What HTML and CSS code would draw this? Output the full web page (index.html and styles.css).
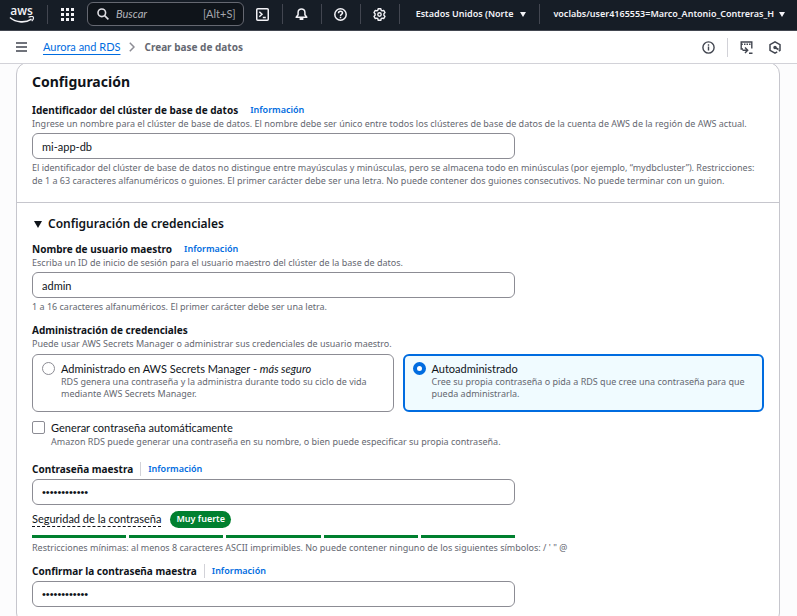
FILE: index.html
```html
<!DOCTYPE html>
<html lang="es">
<head>
<meta charset="utf-8">
<meta name="viewport" content="width=device-width, initial-scale=1">
<title>Crear base de datos</title>
<link rel="stylesheet" href="styles.css">
</head>
<body>
<header class="topbar">
  <a class="logo" href="#"><span class="logo-text">aws</span>
    <svg class="logo-smile" viewBox="0 0 26 8" width="26" height="8" aria-hidden="true"><path d="M1 1.5C7 7 17 7 22.5 3.2" fill="none" stroke="currentColor" stroke-width="1.6"/><path d="M19.6 1.2c2-.8 4.200-.8 4.600-.2s-.1 2.700-1.500 4.100" fill="none" stroke="currentColor" stroke-width="1.200"/></svg>
  </a>
  <button class="apps" type="button" aria-label="Servicios">
    <svg viewBox="0 0 13 13" width="13" height="13" fill="currentColor"><path d="M0 0h3v3H0zM5 0h3v3H5zM10 0h3v3h-3zM0 5h3v3H0zM5 5h3v3H5zM10 5h3v3h-3zM0 10h3v3H0zM5 10h3v3H5zM10 10h3v3h-3z"/></svg>
  </button>
  <div class="search">
    <svg viewBox="0 0 12 12" width="12" height="12" fill="none" stroke="currentColor" stroke-width="1.600"><circle cx="4.800" cy="4.800" r="3.800"/><path d="M7.600 7.600 11.400 11.400"/></svg>
    <input class="search-input" type="text" placeholder="Buscar" aria-label="Buscar">
    <span class="shortcut">[Alt+S]</span>
  </div>
  <nav class="tools">
    <button class="tool" type="button" aria-label="CloudShell"><svg viewBox="0 0 13 13" width="13" height="13" fill="none" stroke="currentColor" stroke-width="1.500"><rect x=".75" y=".75" width="11.500" height="11.500" rx="1"/><path d="M3.300 3.800 6 6.300 3.300 8.800M6.800 9.500h3"/></svg></button>
    <button class="tool" type="button" aria-label="Notificaciones"><svg viewBox="0 0 13 13" width="13" height="13" fill="none" stroke="currentColor" stroke-width="1.500"><path d="M1.200 9.300h10.600L9.900 6.800V4.300a3.400 3.400 0 0 0-6.800 0v2.500z" stroke-linejoin="round"/><path d="M4.600 11h3.800" stroke-width="2"/></svg></button>
    <button class="tool" type="button" aria-label="Ayuda"><svg viewBox="0 0 13 13" width="13" height="13" fill="none" stroke="currentColor" stroke-width="1.500"><circle cx="6.500" cy="6.500" r="5.700"/><path d="M4.500 5.300c0-2.700 4-2.500 4-.2 0 1.400-2 1.300-2 2.800M6.500 8.800v1.400"/></svg></button>
    <button class="tool" type="button" aria-label="Ajustes"><svg viewBox="0 0 13 13" width="13" height="13" fill="none" stroke="currentColor" stroke-width="1.400" stroke-linejoin="round"><path d="M5.200.8h2.600l.4 1.500 1 .6 1.500-.5L12 4.600l-1.100 1.200v1.400L12 8.400l-1.300 2.200-1.500-.5-1 .6-.4 1.500H5.200l-.4-1.500-1-.6-1.500.5L1 8.400l1.100-1.200V5.800L1 4.600l1.300-2.200 1.500.5 1-.6z"/><circle cx="6.500" cy="6.500" r="1.700"/></svg></button>
  </nav>
  <button class="menu menu-region" type="button"><span>Estados Unidos (Norte</span><i class="caret"></i></button>
  <button class="menu" type="button"><span>voclabs/user4165553=Marco_Antonio_Contreras_H</span><i class="caret"></i></button>
</header>

<div class="crumbbar">
  <button class="icon-button" type="button" aria-label="Abrir navegación"><svg viewBox="0 0 11 10" width="11" height="10" stroke="currentColor" stroke-width="1.500"><path d="M0 1h11M0 5h11M0 9h11"/></svg></button>
  <nav class="crumbs">
    <a class="crumb-link" href="#">Aurora and RDS</a>
    <svg viewBox="0 0 6 10" width="6" height="10" fill="none" stroke="currentColor" stroke-width="1.500"><path d="M.8.8 5 5 .8 9.200"/></svg>
    <span class="crumb-current">Crear base de datos</span>
  </nav>
  <div class="panel-tools">
    <button class="icon-button" type="button" aria-label="Información"><svg viewBox="0 0 13 13" width="13" height="13" fill="none" stroke="currentColor" stroke-width="1.400"><circle cx="6.500" cy="6.500" r="5.600"/><path d="M6.500 5.600v4M6.500 3.200v1.500"/></svg></button>
    <span class="rule"></span>
    <button class="icon-button" type="button" aria-label="Panel de comandos"><svg viewBox="0 0 13 13" width="13" height="13" fill="none" stroke="currentColor" stroke-width="1.400"><path d="M3 8H1.200V1h10.600v6.500M1 3.300h1.800M4 3.300h1.500M6.500 3.300H8M9 3.300h1.500M2.500 9.200h4.700M5 6.500l2.700 2.700L5 12M9 12.200h3.500"/></svg></button>
    <button class="icon-button" type="button" aria-label="Amazon Q"><svg viewBox="0 0 12 13" width="12" height="13" fill="none" stroke="currentColor" stroke-width="1.500"><path d="M8.200 10.900 6 12.100 1 9.300V3.700L6 .9l5 2.800v5.600L9.800 10"/><path d="M6 6.500 9.500 8.500" stroke-width="1.800"/><circle cx="6" cy="6.500" r="1" fill="currentColor"/></svg></button>
  </div>
</div>

<main class="content">
  <form class="card">
    <section class="section">
      <h2 class="title">Configuración</h2>
      <div class="field">
        <div class="label-row"><label for="cluster">Identificador del clúster de base de datos</label><a class="info" href="#">Información</a></div>
        <p class="hint">Ingrese un nombre para el clúster de base de datos. El nombre debe ser único entre todos los clústeres de base de datos de la cuenta de AWS de la región de AWS actual.</p>
        <input class="text-input" id="cluster" type="text" value="mi-app-db">
        <p class="hint">El identificador del clúster de base de datos no distingue entre mayúsculas y minúsculas, pero se almacena todo en minúsculas (por ejemplo, “mydbcluster”). Restricciones: de 1 a 63 caracteres alfanuméricos o guiones. El primer carácter debe ser una letra. No puede contener dos guiones consecutivos. No puede terminar con un guion.</p>
      </div>
    </section>
    <section class="section credentials">
      <h3 class="subtitle"><button class="expander" type="button" aria-expanded="true"><i class="caret"></i>Configuración de credenciales</button></h3>
      <div class="field">
        <div class="label-row"><label for="user">Nombre de usuario maestro</label><a class="info" href="#">Información</a></div>
        <p class="hint">Escriba un ID de inicio de sesión para el usuario maestro del clúster de la base de datos.</p>
        <input class="text-input" id="user" type="text" value="admin">
        <p class="hint">1 a 16 caracteres alfanuméricos. El primer carácter debe ser una letra.</p>
      </div>
      <div class="field" role="radiogroup" aria-labelledby="admin-label">
        <div class="label-row" id="admin-label">Administración de credenciales</div>
        <p class="hint">Puede usar AWS Secrets Manager o administrar sus credenciales de usuario maestro.</p>
        <div class="tiles">
          <label class="tile"><input class="radio" type="radio" name="admin"><span class="choice-text"><span class="choice-name">Administrado en AWS Secrets Manager - <em>más seguro</em></span><span class="hint">RDS genera una contraseña y la administra durante todo su ciclo de vida mediante AWS Secrets Manager.</span></span></label>
          <label class="tile selected"><input class="radio" type="radio" name="admin" checked><span class="choice-text"><span class="choice-name">Autoadministrado</span><span class="hint">Cree su propia contraseña o pida a RDS que cree una contraseña para que pueda administrarla.</span></span></label>
        </div>
      </div>
      <label class="check-row"><input class="checkbox" type="checkbox"><span class="choice-text"><span class="choice-name">Generar contraseña automáticamente</span><span class="hint">Amazon RDS puede generar una contraseña en su nombre, o bien puede especificar su propia contraseña.</span></span></label>
      <div class="field password">
        <div class="label-row"><label for="pass">Contraseña maestra</label><a class="info ruled" href="#">Información</a></div>
        <input class="text-input" id="pass" type="password" value="contrasena12">
        <div class="strength"><span class="strength-label">Seguridad de la contraseña</span><span class="badge">Muy fuerte</span></div>
        <div class="meter"><i></i><i></i><i></i><i></i><i></i></div>
        <p class="hint">Restricciones mínimas: al menos 8 caracteres ASCII imprimibles. No puede contener ninguno de los siguientes símbolos: / ' " @</p>
      </div>
      <div class="field">
        <div class="label-row"><label for="confirm">Confirmar la contraseña maestra</label><a class="info ruled" href="#">Información</a></div>
        <input class="text-input" id="confirm" type="password" value="contrasena12">
      </div>
    </section>
  </form>
</main>
</body>
</html>
```
FILE: styles.css
```css
* { box-sizing: border-box; }

body {
  margin: 0;
  height: 100vh;
  display: flex;
  flex-direction: column;
  overflow: hidden;
  background: #fcfcfd;
  color: #0f141a;
  font: 11px/14px Lato, "Noto Sans", sans-serif;
}

button, input { font: inherit; color: inherit; }
button { padding: 0; border: 0; background: none; }
h2, h3, p { margin: 0; }
a { color: #006ce0; }
svg { display: block; flex: none; }

.caret {
  flex: none;
  width: 0;
  height: 0;
  border: solid transparent;
  border-width: 5px 3px 0;
  border-top-color: currentColor;
}

/* Top bar */
.topbar {
  flex: none;
  display: flex;
  align-items: center;
  height: 31px;
  padding-bottom: 2px;
  border-bottom: 1px solid #424650;
  background: #161d26;
  color: #f3f3f7;
}
.logo {
  display: flex;
  flex-direction: column;
  align-items: center;
  width: 48px;
  padding-right: 4px;
  border-right: 1px solid #424650;
  color: inherit;
  text-decoration: none;
}
.logo-text { font: 600 12px/11px "Open Sans", sans-serif; }
.apps { width: 39px; display: grid; place-items: center; }
.search {
  flex: 1;
  min-width: 0;
  display: flex;
  align-items: center;
  gap: 7px;
  height: 24px;
  padding: 0 7px 0 9px;
  border: 1px solid #656871;
  border-radius: 6px;
  background: #0f141a;
  color: #dedee3;
}
.search-input {
  flex: 1;
  min-width: 0;
  padding: 0;
  border: 0;
  outline: 0;
  background: none;
}
.search-input::placeholder { color: #b4b4bb; font-style: italic; }
.shortcut { color: #a4a4ad; }
.tools { display: flex; }
.tool {
  display: grid;
  place-items: center;
  width: 39px;
  height: 20px;
  border-right: 1px solid #424650;
}
.menu {
  display: flex;
  align-items: center;
  gap: 5px;
  height: 20px;
  padding: 0 12px 0 13px;
  font: 600 9px/14px "Noto Sans", sans-serif;
  white-space: nowrap;
}
.menu-region { gap: 7px; padding: 0 13px 0 16px; border-right: 1px solid #424650; }

/* Breadcrumb bar */
.crumbbar {
  flex: none;
  position: relative;
  z-index: 1;
  display: flex;
  align-items: center;
  gap: 16px;
  height: 33px;
  padding: 0 16px;
  border-bottom: 1px solid #d2d2d8;
  background: #fff;
}
.icon-button { color: #424650; }
.crumbs { display: flex; align-items: center; gap: 9px; color: #8c8c94; }
.crumb-link { text-underline-offset: 3px; }
.crumb-current { color: #656871; font: bold 10px/14px "Noto Sans", sans-serif; }
.panel-tools {
  display: flex;
  align-items: center;
  gap: 12px;
  margin-left: auto;
}
.rule { width: 1px; height: 19px; background: #d2d2d8; }
.panel-tools .icon-button:last-child { margin-left: 4px; }

/* Form */
.content { flex: 1; min-height: 0; padding: 0 17px 0 16px; }
.card {
  margin-top: -2px;
  border: 1px solid #c6c6cd;
  border-radius: 12px;
  background: #fff;
}
.section { padding: 9px 15px 15px; }
.credentials { padding-top: 11px; border-top: 1px solid #c6c6cd; }
.title { margin-bottom: 11px; font: bold 14px/20px "Noto Sans", sans-serif; }
.subtitle { margin-bottom: 8px; font: 600 12px/20px "Noto Sans", sans-serif; }
.expander { display: flex; align-items: center; gap: 6px; padding-left: 2px; }
.expander .caret { border-width: 7px 4px 0; }
.field + .field { margin-top: 10px; }
.label-row {
  display: flex;
  align-items: center;
  font: bold 10px/14px "Noto Sans", sans-serif;
}
.info { margin-left: 12px; font-size: 9px; font-weight: 600; text-decoration: none; }
.ruled { margin-left: 7px; padding-left: 7px; border-left: 1px solid #d2d2d8; }
.hint {
  display: block;
  color: #656871;
  font: 9px/13px "Noto Sans", sans-serif;
}
.text-input {
  display: block;
  width: 66%;
  height: 26px;
  margin: 3px 0 2px;
  padding: 0 9px;
  border: 1px solid #8c8c94;
  border-radius: 6px;
  background: #fff;
}
.text-input[type="password"] { font-family: "Liberation Sans", sans-serif; }
.tiles { display: grid; grid-template-columns: 1fr 1fr; gap: 9px; margin-top: 4px; }
.tile {
  display: flex;
  gap: 6px;
  min-height: 58px;
  padding: 7px 9px;
  border: 1px solid #8c8c94;
  border-radius: 6px;
}
.selected { padding: 6px 8px; border: 2px solid #006ce0; background: #f0fbff; }
.radio, .checkbox {
  appearance: none;
  flex: none;
  width: 13px;
  height: 13px;
  margin: 0;
  border: 1px solid #8c8c94;
  background: #fff;
}
.radio { border-radius: 50%; }
.radio:checked { border: 4px solid #006ce0; }
.checkbox { border-radius: 2px; }
.choice-text { flex: 1; }
.choice-name { display: block; }
.tile .hint { line-height: 12px; }
.check-row { display: flex; gap: 6px; margin-top: 9px; }
.password { margin-top: 14px; }
.strength { display: flex; align-items: center; gap: 9px; margin-top: 6px; }
.strength-label { border-bottom: 1px dashed #0f141a; }
.badge {
  padding: 1px 6px 2px;
  border-radius: 9px;
  background: #00802f;
  color: #fff;
  font: 600 9px/14px "Noto Sans", sans-serif;
}
.meter {
  display: grid;
  grid-template-columns: repeat(5, 1fr);
  gap: 3px;
  width: 66%;
  margin: 7px 0 3px;
}
.meter i { height: 3px; background: #00802f; }
```
